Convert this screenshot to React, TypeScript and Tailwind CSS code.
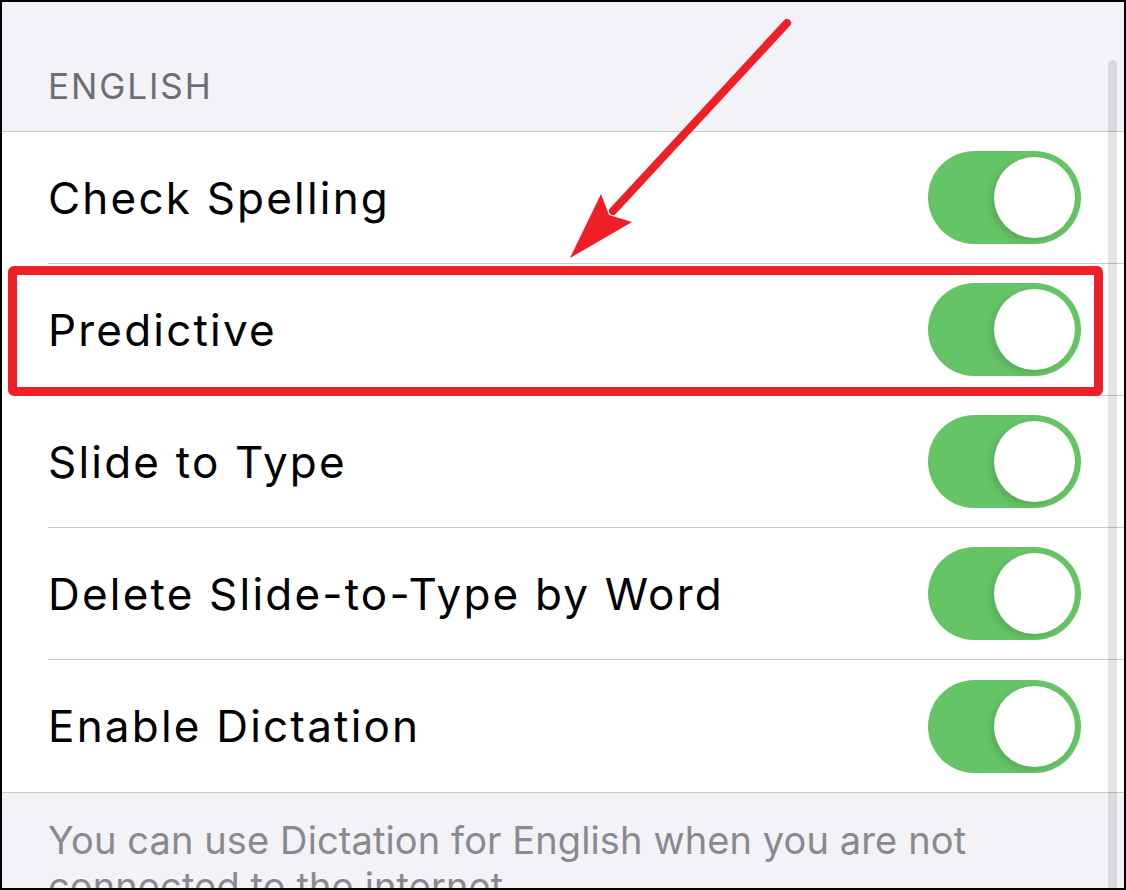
const ROWS = [
  'Check Spelling',
  'Predictive',
  'Slide to Type',
  'Delete Slide-to-Type by Word',
  'Enable Dictation',
];

function Toggle() {
  return (
    <div className="relative w-[153px] h-[93px] rounded-full bg-[#65c466] shrink-0">
      <div className="absolute right-[6px] top-[6px] w-[81px] h-[81px] rounded-full bg-white shadow-[-4px_3px_6px_rgba(0,0,0,0.12)]" />
    </div>
  );
}

function Row({ label, last }: { label: string; last: boolean }) {
  return (
    <div className={last ? 'border-b border-[#c8c7cc]' : ''}>
      <div
        className={
          'ml-[46px] h-[132px] flex items-center justify-between pr-[43px] ' +
          (last ? '' : 'border-b border-[#c8c7cc]')
        }
      >
        <span className="text-[44px] text-black tracking-[0.05em]">{label}</span>
        <Toggle />
      </div>
    </div>
  );
}

export default function App() {
  return (
    <div
      className="relative w-[1126px] h-[890px] border-2 border-black bg-white overflow-hidden"
      style={{ fontFamily: 'Inter, "Liberation Sans", sans-serif' }}
    >
      {/* section header */}
      <div className="h-[130px] bg-[#f2f2f7] border-b border-[#c8c7cc] pl-[46px] pt-[64px]">
        <span className="text-[35px] leading-[40px] text-[#6d6d72] tracking-[0.055em]">ENGLISH</span>
      </div>

      {ROWS.map((r, i) => (
        <Row key={r} label={r} last={i === ROWS.length - 1} />
      ))}

      {/* footer */}
      <div className="bg-[#f2f2f7] h-[200px] pl-[46px] pr-[120px] pt-[24px]">
        <p className="text-[38px] leading-[46px] text-[#8a8a8e] tracking-[0.003em]">
          You can use Dictation for English when you are not connected to the internet.
        </p>
      </div>

      {/* scroll indicator */}
      <div className="absolute left-[1106px] top-[58px] bottom-0 w-[9px] rounded-t-full bg-black/10" />

      {/* highlight box */}
      <div className="absolute left-[6px] top-[264px] w-[1095px] h-[130px] border-[9px] border-[#ee1f26] rounded-[6px]" />

      {/* arrow */}
      <svg className="absolute left-0 top-0" width="1122" height="886" viewBox="2 2 1122 886">
        <line x1="787" y1="23" x2="613" y2="211" stroke="#ee1f26" strokeWidth="8" strokeLinecap="round" />
        <polygon points="570,258 601,194 609,215 632,222" fill="#ee1f26" />
      </svg>
    </div>
  );
}
